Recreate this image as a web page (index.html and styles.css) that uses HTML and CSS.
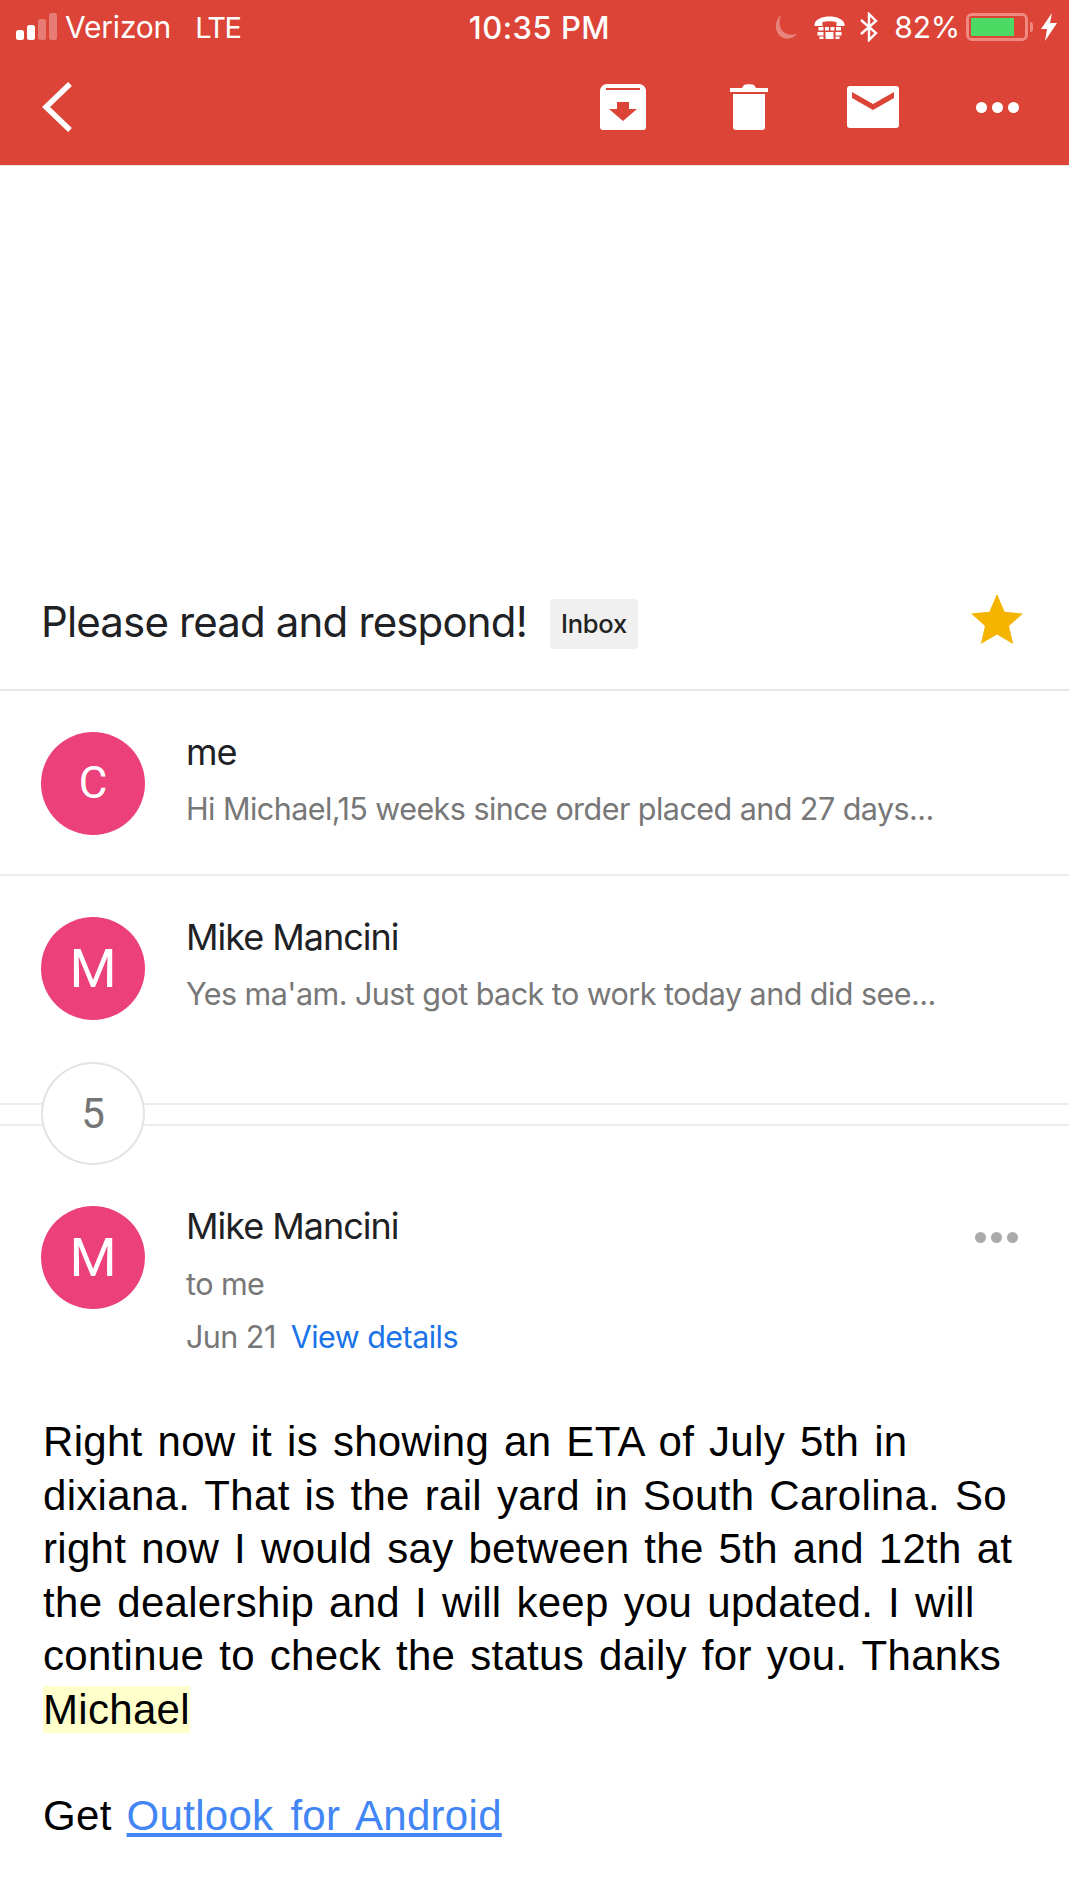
FILE: index.html
```html
<!DOCTYPE html>
<html lang="en">
<head>
<meta charset="utf-8">
<title>Please read and respond!</title>
<link rel="stylesheet" href="styles.css">
</head>
<body>
<header class="top">
  <div class="status">
    <div class="status-left">
      <svg class="signal" viewBox="0 0 42 28" width="44" height="28"><rect x="0" y="17" width="8" height="10" rx="2.5" fill="#fff"/><rect x="11" y="12" width="8" height="15" rx="2.5" fill="#fff"/><rect x="22" y="6" width="8" height="21" rx="2.5" fill="#fff" opacity=".3"/><rect x="33" y="0" width="8" height="27" rx="2.5" fill="#fff" opacity=".3"/></svg>
      <span class="carrier">Verizon</span>
      <span class="net">LTE</span>
    </div>
    <div class="clock">10:35 PM</div>
    <div class="status-right">
      <svg class="moon" viewBox="0 0 24 26" width="24" height="26"><path d="M7 1C1 6 0 15 5 21c5 5 13 5 18-1-7 2-13 0-16-5C5 11 5 6 7 1z" fill="#fff" opacity=".35"/></svg>
      <svg class="tty" viewBox="0 0 30 26" width="31" height="26"><path d="M0 10C2 0 28 0 30 10v2h-8V8C18 7 12 7 8 8v4H0z" fill="#fff"/><path d="M4 13h5v3.500H4zM10.500 13h4v3.500h-4zM16 13h4v3.500h-4zM21.500 13h5v3.500h-5zM3 18h6v3.500H3zM11 18h8v7h-8zM21 18h6v3.500h-6zM5 22.500h4V25H5zM21 22.500h4V25h-4z" fill="#fff"/></svg>
      <svg class="bt" viewBox="0 0 20 30" width="20" height="30"><path d="M2 8l15 13-7 7V2l7 7L2 22" fill="none" stroke="#fff" stroke-width="2.4"/></svg>
      <span class="pct">82%</span>
      <div class="battery"><div class="charge"></div></div>
      <div class="nub"></div>
      <svg class="bolt" viewBox="0 0 16 28" width="16" height="28"><path d="M11 0L0 16h6L4 28 16 10H9z" fill="#fff"/></svg>
    </div>
  </div>
  <div class="actions">
    <svg class="back" viewBox="0 0 32 52" width="32" height="52"><path d="M29 3L5 26l24 23" fill="none" stroke="#fff" stroke-width="5.500"/></svg>
    <div class="tools">
      <svg class="tool archive" viewBox="0 0 48 48" width="48" height="48"><path d="M8 1h32a7 7 0 0 1 7 6v37a3 3 0 0 1-3 3H4a3 3 0 0 1-3-3V7a7 7 0 0 1 7-6z" fill="#fff"/><path d="M7 6h34" stroke="#db4437" stroke-width="2"/><path d="M18 19h12v7h8L24 38 10 26h8z" fill="#db4437"/></svg>
      <svg class="tool trash" viewBox="0 0 38 48" width="38" height="48"><path d="M0 5h12l2-3c1-1 9-1 10 0l2 3h12v4H0zM3 11h32v33a3 3 0 0 1-3 3H6a3 3 0 0 1-3-3z" fill="#fff"/></svg>
      <svg class="tool mail" viewBox="0 0 52 42" width="52" height="42"><rect x="0" y="0" width="52" height="42" rx="3" fill="#fff"/><path d="M5 6l21 12L47 6v6L26 24 5 12z" fill="#db4437"/></svg>
      <div class="dots"><i></i><i></i><i></i></div>
    </div>
  </div>
</header>

<main class="mail-view">
  <div class="subject-row">
    <h1 class="subject">Please read and respond!</h1>
    <span class="label">Inbox</span>
    <svg class="star" viewBox="0 0 52 50" width="52" height="50"><path d="M26 0l7.600 17.800L52 19.600 38 32l4.200 18L26 40.600 9.800 50 14 32 0 19.600l18.400-1.800z" fill="#f4b400"/></svg>
  </div>

  <section class="msg">
    <div class="avatar small-letter">C</div>
    <div class="msg-text">
      <div class="name">me</div>
      <div class="snippet">Hi Michael,15 weeks since order placed and 27 days...</div>
    </div>
  </section>

  <section class="msg plain">
    <div class="avatar">M</div>
    <div class="msg-text">
      <div class="name">Mike Mancini</div>
      <div class="snippet">Yes ma'am. Just got back to work today and did see...</div>
    </div>
  </section>

  <div class="collapsed"><div class="count">5</div></div>

  <section class="open-head">
    <div class="avatar">M</div>
    <div class="msg-text">
      <div class="name">Mike Mancini</div>
      <div class="to">to me</div>
      <div class="date">Jun 21<a class="details">View details</a></div>
    </div>
    <div class="dots grey"><i></i><i></i><i></i></div>
  </section>

  <article class="body">
    <p class="para">Right now it is showing an ETA of July 5th in<br>dixiana. That is the rail yard in South Carolina. So<br>right now I would say between the 5th and 12th at<br>the dealership and I will keep you updated. I will<br>continue to check the status daily for you. Thanks<br><mark class="hl">Michael</mark></p>
    <p class="sig">Get <a class="outlook">Outlook for Android</a></p>
  </article>
</main>
</body>
</html>
```

FILE: styles.css
```css
* { box-sizing: border-box; }
html, body { margin: 0; padding: 0; background: #fff; }
body { width: 1069px; height: 1900px; overflow: hidden; font-family: "Inter", "Liberation Sans", sans-serif; color: #202124; }

.top { height: 166px; background: #db4437; color: #fff; border-bottom: 1px solid #e8e2e0; }
.status { height: 54px; display: grid; grid-template-columns: 1fr auto 1fr; align-items: center; padding: 0 12px 0 15px; }
.status-left { display: flex; align-items: center; }
.signal { margin-right: 6px; }
.carrier, .pct { font: 400 30px "Inter", sans-serif; letter-spacing: -.2px; }
.net { margin-left: 24px; font: 400 29px "Inter", sans-serif; letter-spacing: -1.500px; }
.clock { padding-left: 7px; font: 500 31px "Inter", sans-serif; letter-spacing: .5px; }
.status-right { display: flex; align-items: center; justify-content: flex-end; }
.moon { margin-right: 16px; }
.tty { margin-right: 14px; }
.bt { margin-right: 15px; }
.pct { margin-right: 6px; }
.battery { width: 62px; height: 28px; border: 3px solid #f08a80; border-radius: 6px; padding: 2px; }
.charge { width: 43px; height: 100%; background: #4cd964; }
.nub { width: 3px; height: 10px; background: #f08a80; margin: 0 8px 0 2px; border-radius: 0 3px 3px 0; }

.actions { height: 110px; display: flex; align-items: center; justify-content: space-between; padding: 0 50px 4px 41px; }
.tools { display: flex; align-items: center; }
.tool { display: block; }
.archive { margin-right: 83px; }
.trash { margin-right: 79px; }
.mail { margin-right: 77px; }
.dots { display: flex; gap: 5px; }
.dots i { width: 11px; height: 11px; border-radius: 50%; background: #fff; display: block; }
.dots.grey { margin-left: auto; margin-right: 10px; margin-top: 26px; align-self: flex-start; }
.dots.grey i { background: #aaa; }

.mail-view { display: block; padding-top: 425px; }
.subject-row { display: flex; align-items: center; height: 100px; padding: 0 46px 36px 41px; border-bottom: 2px solid #e6e6e6; }
.subject { font: 400 42px/1 "Inter", sans-serif; letter-spacing: -.85px; margin: 0; color: #202124; }
.label { margin: 3px 0 0 23px; background: #f0f0f0; border-radius: 4px; padding: 0 11px 0 11px; width: 88px; height: 50px; font: 500 25.500px/50px "Inter", sans-serif; letter-spacing: -.2px; color: #222; }
.star { margin-left: auto; margin-top: -6px; }

.msg { display: flex; height: 185px; padding: 41px 41px 0; border-bottom: 2px solid #ececec; }
.msg.plain { border-bottom: 0; }
.avatar { flex: none; width: 104px; height: 103px; border-radius: 50%; background: #ec407a; color: #fff; text-align: center; font: 400 54px/103px "Roboto", sans-serif; }
.small-letter { font-size: 44px; }
.msg-text { margin-left: 41px; }
.name { font: 400 36px/40px "Inter", sans-serif; color: #202124; letter-spacing: -1px; }
.snippet { margin-top: 17px; font: 400 30.500px/40px "Inter", sans-serif; color: #777; letter-spacing: -.55px; white-space: nowrap; }

.collapsed { position: relative; height: 229px; }
.collapsed::before { content: ""; display: block; position: absolute; left: 0; right: 0; top: 41px; height: 19px; border-top: 2px solid #ececec; border-bottom: 2px solid #ececec; }
.count { position: relative; margin: 1px 0 0 41px; width: 104px; height: 103px; border-radius: 50%; border: 2px solid #e3e3e3; background: #fff; color: #757575; text-align: center; font: 400 42px/99px "Roboto", sans-serif; }

.open-head { display: flex; padding: 0 41px; margin-top: -85px; height: 185px; }
.to { margin-top: 18px; font: 400 30.500px/40px "Inter", sans-serif; color: #777; letter-spacing: -.55px; }
.date { margin-top: 13px; font: 400 30.500px/40px "Inter", sans-serif; color: #777; letter-spacing: -.55px; }
.details { margin-left: 15px; color: #1a73e8; }

.body { padding: 24px 0 0 43px; font: 400 42px/53.500px "Liberation Sans", sans-serif; color: #000; word-spacing: 3px; letter-spacing: .3px; }
.para { margin: 0; }
.hl { background: #ffffcc; color: #000; }
.sig { margin: 53px 0 0; }
.outlook { color: #4285f4; text-decoration: underline; word-spacing: 5px; }
```
